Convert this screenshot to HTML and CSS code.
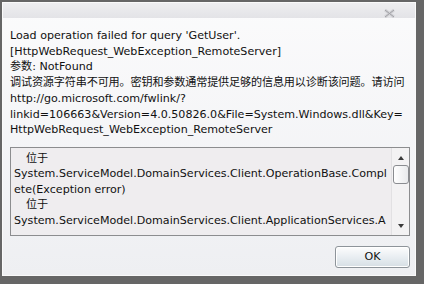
FILE: index.html
```
<!DOCTYPE html>
<html lang="zh-CN">
<head>
  <meta charset="UTF-8" />
  <title>Error</title>
  <link rel="stylesheet" href="styles.css">
</head>
<body>
  <div class="dialog">
    <div class="titlebar">
      <svg class="close" width="11" height="9" viewBox="0 0 11 9">
        <path d="M1 1 L10 8 M10 1 L1 8" stroke="#d2d2d6" stroke-width="3" />
        <path d="M1 1 L10 8 M10 1 L1 8" stroke="#a0a0a5" stroke-width="1" />
      </svg>
    </div>
    <div class="content">
      <div class="message">
        <div>Load operation failed for query 'GetUser'.</div>
        <div>[HttpWebRequest_WebException_RemoteServer]</div>
        <div>参数: NotFound</div>
        <div class="cjk">调试资源字符串不可用。密钥和参数通常提供足够的信息用以诊断该问题。请访问</div>
        <div>http://go.microsoft.com/fwlink/?</div>
        <div>linkid=106663&amp;Version=4.0.50826.0&amp;File=System.Windows.dll&amp;Key=</div>
        <div>HttpWebRequest_WebException_RemoteServer</div>
      </div>
      <div class="details">
        <div class="trace">
          <div class="indent">位于</div>
          <div>System.ServiceModel.DomainServices.Client.OperationBase.Compl</div>
          <div>ete(Exception error)</div>
          <div class="indent">位于</div>
          <div>System.ServiceModel.DomainServices.Client.ApplicationServices.A</div>
        </div>
        <div class="scrollbar">
          <span class="arrow up"></span>
          <span class="thumb"></span>
          <span class="arrow down"></span>
        </div>
      </div>
      <div class="buttons">
        <button class="ok">OK</button>
      </div>
    </div>
  </div>
</body>
</html>
```
FILE: styles.css
```
html, body { margin: 0; padding: 0; }
body {
  width: 424px; height: 284px; overflow: hidden;
  background: #666666;
  font-family: "DejaVu Sans", "Noto Sans CJK SC", sans-serif;
  font-size: 11.1px; color: #111111;
}
.dialog {
  margin: 2px 0 0 2px; width: 412px; height: 272px;
  border: 1px solid #fafafa;
  background: linear-gradient(#fbfbfc, #eeeff2);
  display: flex; flex-direction: column;
}
.titlebar {
  height: 14px; background: linear-gradient(#eeeef0, #e3e3e7);
  display: flex; justify-content: flex-end; align-items: flex-end;
  padding-right: 20px; padding-top: 1px;
}
.content { padding: 10px 0 0 7px; flex: 1; }
.message { line-height: 15.7px; white-space: nowrap; }
.cjk { letter-spacing: -0.14px; }
.details {
  margin-top: 9px; width: 398px; height: 87px;
  border: 1px solid #8c8d8f; background: #efedef;
  display: flex;
}
.trace { flex: 1; padding: 3px 0 0 3px; line-height: 15.5px; white-space: nowrap; overflow: hidden; }
.indent { padding-left: 12px; }
.scrollbar {
  width: 17px; background: #f3f2f3; border-left: 1px solid #e2e1e3;
  display: flex; flex-direction: column; align-items: center;
}
.arrow { width: 0; height: 0; border-left: 3px solid transparent; border-right: 3px solid transparent; }
.up { border-bottom: 4px solid #3a3a3a; margin-top: 8px; }
.down { border-top: 4px solid #3a3a3a; margin-top: auto; margin-bottom: 7px; }
.thumb {
  width: 14px; height: 17px; margin-top: 5px;
  border: 1px solid #8a8c90; border-radius: 3px;
  background: linear-gradient(90deg, #ffffff, #e9eaec);
}
.buttons { display: flex; justify-content: flex-end; padding: 10px 5px 0 0; }
.ok {
  width: 75px; height: 22px; padding: 0;
  font-family: "DejaVu Sans", sans-serif; font-size: 11.1px; color: #111111;
  border: 1px solid #8e949a; border-radius: 3px;
  background: linear-gradient(#fdfdfd, #e9eef2 50%, #d6dee4);
  box-shadow: inset 0 0 0 1px #ffffff;
}
```
